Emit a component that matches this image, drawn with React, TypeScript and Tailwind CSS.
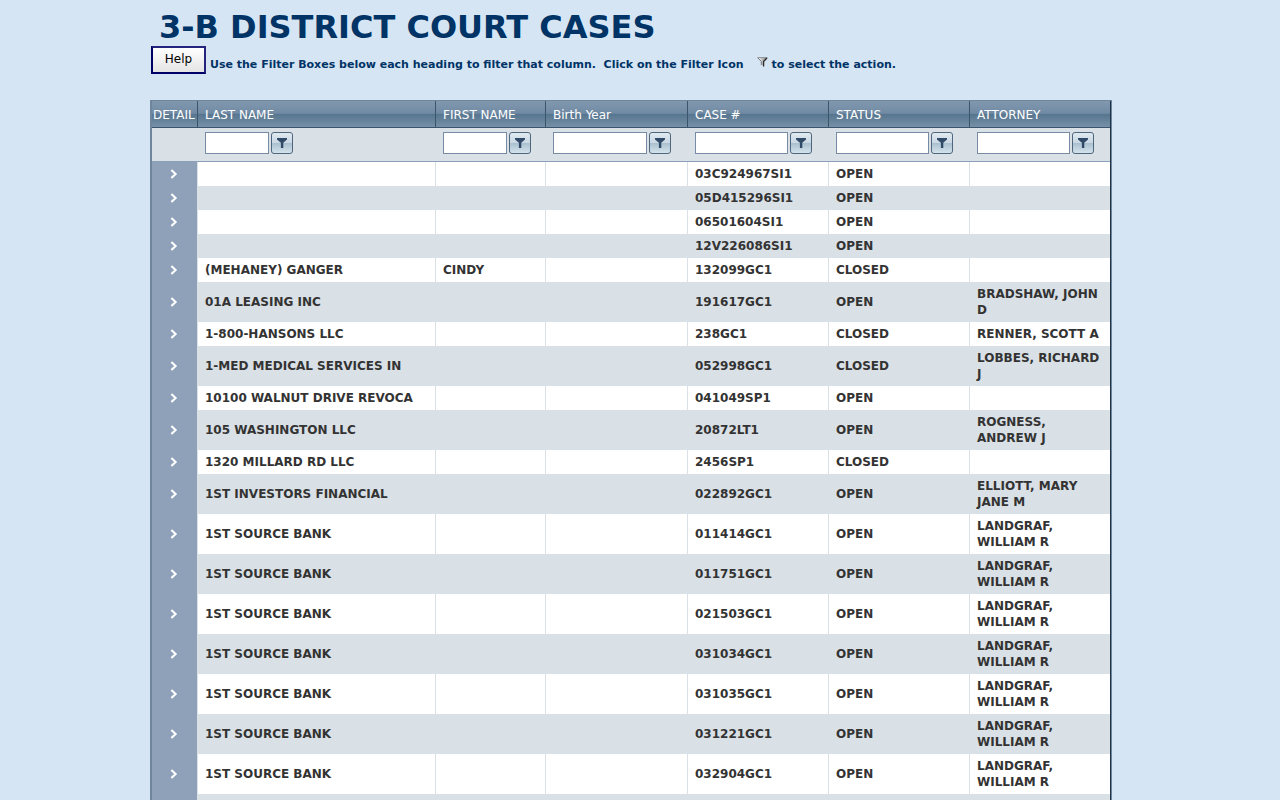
type CaseRow = {
  last: string;
  first: string;
  birth: string;
  caseNo: string;
  status: string;
  attorney: string;
};

const row = (last: string, first: string, caseNo: string, status: string, attorney: string): CaseRow => ({
  last,
  first,
  birth: "",
  caseNo,
  status,
  attorney,
});

const rows: CaseRow[] = [
  row("", "", "03C924967SI1", "OPEN", ""),
  row("", "", "05D415296SI1", "OPEN", ""),
  row("", "", "06501604SI1", "OPEN", ""),
  row("", "", "12V226086SI1", "OPEN", ""),
  row("(MEHANEY) GANGER", "CINDY", "132099GC1", "CLOSED", ""),
  row("01A LEASING INC", "", "191617GC1", "OPEN", "BRADSHAW, JOHN D"),
  row("1-800-HANSONS LLC", "", "238GC1", "CLOSED", "RENNER, SCOTT A"),
  row("1-MED MEDICAL SERVICES IN", "", "052998GC1", "CLOSED", "LOBBES, RICHARD J"),
  row("10100 WALNUT DRIVE REVOCA", "", "041049SP1", "OPEN", ""),
  row("105 WASHINGTON LLC", "", "20872LT1", "OPEN", "ROGNESS, ANDREW J"),
  row("1320 MILLARD RD LLC", "", "2456SP1", "CLOSED", ""),
  row("1ST INVESTORS FINANCIAL", "", "022892GC1", "OPEN", "ELLIOTT, MARY JANE M"),
  row("1ST SOURCE BANK", "", "011414GC1", "OPEN", "LANDGRAF, WILLIAM R"),
  row("1ST SOURCE BANK", "", "011751GC1", "OPEN", "LANDGRAF, WILLIAM R"),
  row("1ST SOURCE BANK", "", "021503GC1", "OPEN", "LANDGRAF, WILLIAM R"),
  row("1ST SOURCE BANK", "", "031034GC1", "OPEN", "LANDGRAF, WILLIAM R"),
  row("1ST SOURCE BANK", "", "031035GC1", "OPEN", "LANDGRAF, WILLIAM R"),
  row("1ST SOURCE BANK", "", "031221GC1", "OPEN", "LANDGRAF, WILLIAM R"),
  row("1ST SOURCE BANK", "", "032904GC1", "OPEN", "LANDGRAF, WILLIAM R"),
  row("", "", "", "", ""),
];

const columns: { key: keyof CaseRow; label: string; input: string }[] = [
  { key: "last", label: "LAST NAME", input: "w-16" },
  { key: "first", label: "FIRST NAME", input: "w-16" },
  { key: "birth", label: "Birth Year", input: "w-[94px]" },
  { key: "caseNo", label: "CASE #", input: "w-[93px]" },
  { key: "status", label: "STATUS", input: "w-[93px]" },
  { key: "attorney", label: "ATTORNEY", input: "w-[93px]" },
];

const headCell =
  "h-[27px] border-r border-b border-r-[#3d556c] border-b-[#3d556c] pt-px text-left font-normal text-white last:border-r-0";

function FilterIcon() {
  return (
    <svg width="12" height="12" viewBox="0 0 12 12" aria-hidden="true">
      <path d="M1 1H11V2.4L7.3 5.8V11H4.9V5.8L1 2.4Z" fill="#304a67" />
    </svg>
  );
}

function FunnelIcon() {
  return (
    <svg width="11" height="10" viewBox="0 0 11 10" aria-hidden="true" className="mr-1 mb-px ml-[13px] inline-block align-baseline">
      <defs>
        <linearGradient id="funnel" x1="0" x2="1">
          <stop offset="0" stopColor="#ffffff" />
          <stop offset="1" stopColor="#777777" />
        </linearGradient>
      </defs>
      <path d="M0.8 0.6H10.2L6.5 4.6V9.2L4.2 7.8V4.6Z" fill="url(#funnel)" />
      <path d="M0.3 0.6H10.5" stroke="#8d929a" strokeWidth="1" />
      <path d="M1 1L4.3 4.6V8" fill="none" stroke="#777b82" strokeWidth="1" />
      <path d="M10 1L6.6 4.6V9.6" fill="none" stroke="#2b2b2b" strokeWidth="1.3" />
    </svg>
  );
}

function Chevron() {
  return (
    <svg width="8" height="10" viewBox="0 0 8 10" aria-hidden="true">
      <path d="M1.4 0.9L5.6 5L1.4 9.1" fill="none" stroke="#ffffff" strokeWidth="2.1" />
    </svg>
  );
}

export default function App() {
  return (
    <div className="min-h-screen bg-[#d6e5f3] font-['DejaVu_Sans',sans-serif] text-xs leading-4 text-[#333333]">
      <main className="mx-auto max-w-[980px] pt-2">
        <h1 className="pl-[9px] text-[32px] leading-[38px] font-bold text-[#003366]">3-B DISTRICT COURT CASES</h1>
        <div className="flex items-start pl-px">
          <button
            type="button"
            className="h-7 w-[55px] shrink-0 border-2 border-[#000066] border-t-[#24247c] border-r-[#24247c] bg-linear-to-b from-white to-[#e4e4e4] pb-[2px] text-black"
          >
            Help
          </button>
          <p className="pt-[11px] pl-1 text-[11px] font-bold text-[#003366]">
            Use the Filter Boxes below each heading to filter that column.&nbsp; Click on the Filter Icon
            <FunnelIcon />
            to select the action.
          </p>
        </div>

        <div className="mt-[26px] max-w-[962px] border border-l-2 border-[#6f859b]">
          <table className="w-full table-fixed border-separate border-spacing-0 border-r border-[#1f3347]">
            <colgroup>
              <col className="w-[46px]" />
              <col className="w-[238px]" />
              <col className="w-[110px]" />
              <col className="w-[142px]" />
              <col className="w-[141px]" />
              <col className="w-[141px]" />
              <col />
            </colgroup>
            <thead>
              <tr className="bg-[linear-gradient(to_bottom,#8198ae_0%,#718ba5_45%,#58768f_50%,#7893aa_100%)]">
                <th scope="col" className={headCell + " pl-px whitespace-nowrap"}>DETAIL</th>
                {columns.map((c) => (
                  <th key={c.key} scope="col" className={headCell + " pl-[7px]"}>
                    {c.label}
                  </th>
                ))}
              </tr>
              <tr className="bg-[#d9e0e6]">
                <td className="h-[34px] border-b border-[#8ba0bc]" />
                {columns.map((c) => (
                  <td key={c.key} className="h-[34px] border-b border-[#8ba0bc] pb-[3px] pl-[7px]">
                    <div className="flex gap-[2px]">
                      <input
                        type="text"
                        aria-label={c.label}
                        className={"h-[22px] border border-[#768ca5] bg-white px-1 " + c.input}
                      />
                      <button
                        type="button"
                        aria-label={"Filter " + c.label}
                        className="flex size-[22px] shrink-0 items-center justify-center rounded-[3px] border border-[#50667d] bg-[linear-gradient(to_bottom,#e0eaf1_0%,#c9d8e3_48%,#a9bfce_50%,#d3e3ed_100%)]"
                      >
                        <FilterIcon />
                      </button>
                    </div>
                  </td>
                ))}
              </tr>
            </thead>
            <tbody>
              {rows.map((r, i) => (
                <tr key={i} className="bg-white font-bold even:bg-[#d9e0e6]">
                  <td className="h-6 border-r border-[#d9e0e6] bg-[#8fa1b9]">
                    <button type="button" aria-label="Expand" className="flex w-full items-center justify-center pr-[2px]">
                      <Chevron />
                    </button>
                  </td>
                  {columns.map((c) => (
                    <td key={c.key} className="h-6 border-r border-[#d9e0e6] py-1 pr-[6px] pl-[7px] last:border-r-0">
                      {r[c.key]}
                    </td>
                  ))}
                </tr>
              ))}
            </tbody>
          </table>
        </div>
      </main>
    </div>
  );
}
